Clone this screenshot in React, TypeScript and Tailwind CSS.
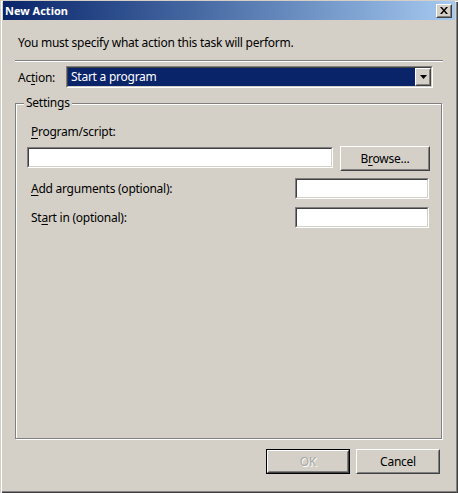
import React from "react";

const font = { fontFamily: '"Noto Sans", "Open Sans", sans-serif' };

function Sunken({ className = "", children }: { className?: string; children?: React.ReactNode }) {
  return (
    <div className={"border border-t-[#808080] border-l-[#808080] border-b-white border-r-white " + className}>
      <div className="h-full w-full bg-white border border-t-[#404040] border-l-[#404040] border-b-[#d4d0c8] border-r-[#d4d0c8]">
        {children}
      </div>
    </div>
  );
}

function Raised({ className = "", children }: { className?: string; children?: React.ReactNode }) {
  return (
    <div className={"border border-t-white border-l-white border-b-[#404040] border-r-[#404040] " + className}>
      <div className="h-full w-full flex items-center justify-center border border-t-[#d4d0c8] border-l-[#d4d0c8] border-b-[#808080] border-r-[#808080]">
        {children}
      </div>
    </div>
  );
}

export default function App() {
  return (
    <div
      className="w-[458px] h-[493px] bg-[#d4d0c8] flex flex-col pt-[1px] pl-[3px] pr-[3px] pb-[3px] text-[12px] tracking-[-0.25px] text-black shadow-[inset_1px_1px_0_#d4d0c8,inset_2px_2px_0_#ffffff,inset_-1px_-1px_0_#404040,inset_-2px_-2px_0_#808080]"
      style={font}
    >
      {/* Title bar */}
      <div className="h-[19px] flex items-center justify-between bg-linear-to-r from-[#0a246a] to-[#a6caf0] pl-[2px] pr-[3px]">
        <span className="text-white font-bold text-[11px] tracking-normal leading-none">New Action</span>
        <Raised className="w-[16px] h-[14px] bg-[#d4d0c8]">
          <svg width="8" height="7" viewBox="0 0 8 7">
            <path d="M0 0h2l2 2.5L6 0h2L5 3.5 8 7H6L4 4.5 2 7H0l3-3.5z" fill="#000" />
          </svg>
        </Raised>
      </div>

      {/* Body */}
      <div className="flex-1 flex flex-col px-[12px] pt-[15px]">
        <div className="leading-[15px] h-[15px] pl-[3px]">You must specify what action this task will perform.</div>
        <div className="mt-[10px] h-[2px] border-t border-t-[#808080] border-b border-b-white" />

        <div className="mt-[4px] flex items-center pl-[3px]">
          <div className="w-[48px] leading-[15px]">
            Ac<u className="underline-offset-2">t</u>ion:
          </div>
          <Sunken className="w-[367px] h-[22px]">
            <div className="h-full flex">
              <div className="flex-1 bg-[#0a246a] text-white leading-[18px] pl-[3px]">Start a program</div>
              <Raised className="w-[16px] h-[18px] bg-[#d4d0c8]">
                <svg width="7" height="4" viewBox="0 0 7 4">
                  <path d="M0 0h7L3.5 4z" fill="#000" />
                </svg>
              </Raised>
            </div>
          </Sunken>
        </div>

        {/* Settings group */}
        <div className="relative mt-[15px] w-[427px] h-[336px] border border-[#808080] shadow-[1px_1px_0_#ffffff,inset_1px_1px_0_#ffffff] px-[11px] pt-[20px]">
          <div className="absolute left-[8px] top-[-9px] px-[2px] bg-[#d4d0c8] leading-[15px]">Settings</div>

          <div className="leading-[15px] pl-[4px]">
            <u className="underline-offset-2">P</u>rogram/script:
          </div>
          <div className="mt-[7px] flex items-start gap-[7px]">
            <Sunken className="mt-[1px] w-[306px] h-[21px]" />
            <Raised className="w-[90px] h-[25px] bg-[#d4d0c8]">
              <span className="leading-none">
                B<u className="underline-offset-2">r</u>owse...
              </span>
            </Raised>
          </div>

          <div className="mt-[7px] flex items-center justify-between pr-[1px]">
            <div className="pl-[4px] leading-[15px]">
              <u className="underline-offset-2">A</u>dd arguments (optional):
            </div>
            <Sunken className="w-[134px] h-[21px]" />
          </div>
          <div className="mt-[8px] flex items-center justify-between pr-[1px]">
            <div className="pl-[4px] leading-[15px]">
              St<u className="underline-offset-2">a</u>rt in (optional):
            </div>
            <Sunken className="w-[134px] h-[21px]" />
          </div>
        </div>

        {/* Buttons */}
        <div className="mt-[10px] flex justify-end gap-[6px] pr-[3px]">
          <div className="w-[84px] h-[25px] border border-black">
            <Raised className="w-full h-full bg-[#d4d0c8]">
              <span className="leading-none text-[#a8a7a3] [text-shadow:1px_1px_0_#ffffff]">OK</span>
            </Raised>
          </div>
          <Raised className="w-[84px] h-[25px] bg-[#d4d0c8]">
            <span className="leading-none">Cancel</span>
          </Raised>
        </div>
      </div>
    </div>
  );
}
